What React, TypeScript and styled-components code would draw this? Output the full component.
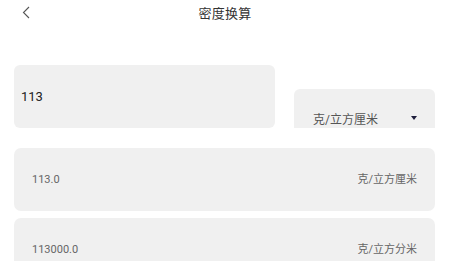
import React, { useState } from "react";
import styled, { createGlobalStyle } from "styled-components";

const GlobalStyle = createGlobalStyle`
  html, body {
    margin: 0;
    padding: 0;
    background: #ffffff;
  }
  body {
    font-family: Roboto, "Noto Sans CJK SC", sans-serif;
    -webkit-font-smoothing: antialiased;
  }
`;

const Page = styled.div`
  width: 450px;
  height: 261px;
  overflow: hidden;
  background: #fff;
`;

const Header = styled.div`
  display: grid;
  grid-template-columns: 1fr auto 1fr;
  align-items: center;
  height: 25px;
  padding: 0 20px;
`;

const BackButton = styled.button`
  justify-self: start;
  display: flex;
  align-items: center;
  border: 0;
  background: none;
  padding: 0 0 0 2px;
  cursor: pointer;
  color: #555;
`;

const Title = styled.div`
  font-size: 13px;
  color: #333;
  letter-spacing: 0.2px;
`;

const InputRow = styled.div`
  display: flex;
  align-items: flex-end;
  gap: 19px;
  margin-top: 40px;
  padding: 0 15px 0 14px;
`;

const ValueInput = styled.input`
  flex: 0 0 261px;
  box-sizing: border-box;
  height: 63px;
  border: 0;
  outline: none;
  border-radius: 6px;
  background: #f0f0f0;
  padding: 0 7px;
  font-family: Roboto, "Noto Sans CJK SC", sans-serif;
  font-size: 13px;
  color: #222;
`;

const Select = styled.div`
  flex: 1;
  height: 39px;
  border-radius: 6px 6px 0 0;
  background: #f0f0f0;
  overflow: hidden;
`;

const SelectInner = styled.div`
  display: flex;
  align-items: center;
  justify-content: space-between;
  padding: 23px 18px 0 19px;
  height: 16px;
  font-size: 12px;
  line-height: 16px;
  color: #555;
`;

const Caret = styled.span`
  width: 0;
  height: 0;
  margin-top: -4px;
  border-left: 3.5px solid transparent;
  border-right: 3.5px solid transparent;
  border-top: 4px solid #1e1e3c;
`;

const Results = styled.div`
  display: flex;
  flex-direction: column;
  gap: 7px;
  margin-top: 20px;
  padding: 0 15px 0 14px;
`;

const ResultRow = styled.div`
  display: flex;
  align-items: center;
  justify-content: space-between;
  height: 63px;
  flex-shrink: 0;
  padding: 0 18px;
  border-radius: 7px;
  background: #f0f0f0;
  font-size: 11px;
  line-height: 14px;
  color: #666;
`;

const results = [
  { value: "113.0", unit: "克/立方厘米" },
  { value: "113000.0", unit: "克/立方分米" },
];

function BackIcon() {
  return (
    <svg width="9" height="13" viewBox="0 0 9 13" fill="none">
      <path d="M7 1 L1.5 6.5 L7 12" stroke="currentColor" strokeWidth="1.1" />
    </svg>
  );
}

export default function App() {
  const [value, setValue] = useState("113");

  return (
    <Page>
      <GlobalStyle />
      <Header>
        <BackButton aria-label="返回">
          <BackIcon />
        </BackButton>
        <Title>密度换算</Title>
        <span />
      </Header>

      <InputRow>
        <ValueInput value={value} onChange={(e) => setValue(e.target.value)} />
        <Select>
          <SelectInner>
            <span>克/立方厘米</span>
            <Caret />
          </SelectInner>
        </Select>
      </InputRow>

      <Results>
        {results.map((r) => (
          <ResultRow key={r.unit}>
            <span>{r.value}</span>
            <span>{r.unit}</span>
          </ResultRow>
        ))}
      </Results>
    </Page>
  );
}
